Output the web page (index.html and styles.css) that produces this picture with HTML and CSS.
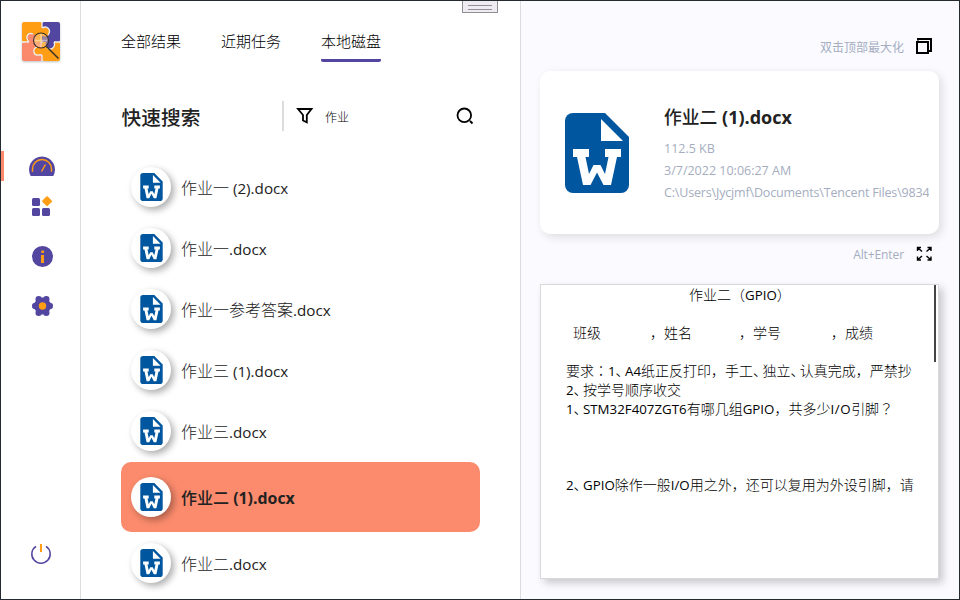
FILE: index.html
```html
<!DOCTYPE html>
<html lang="zh-CN">
<head>
<meta charset="utf-8">
<title>快速搜索</title>
<link rel="stylesheet" href="styles.css">
</head>
<body>
<svg class="defs" width="0" height="0">
  <symbol id="word" viewBox="0 0 64 80">
    <path fill="#00569f" d="M8 0H40L64 24V72a8 8 0 0 1-8 8H8a8 8 0 0 1-8-8V8a8 8 0 0 1 8-8z"/>
    <path fill="#fff" d="M36 6V28H58zM8 36H24V44H20.500L24 61 28.500 52H35.500L40 61 43.500 44H40V36H56V44H52L46 72H38.500L32 59.500 25.500 72H18L12 44H8z"/>
  </symbol>
</svg>
<div class="window">
  <nav class="sidebar">
    <svg class="logo" width="42" height="42" viewBox="0 0 42 42">
      <rect x="1" y="1" width="20" height="20" rx="2" fill="#ff9d14"/>
      <rect x="21" y="1" width="18" height="20" rx="2" fill="#5346a0"/>
      <rect x="1" y="21" width="20" height="19" rx="2" fill="#fa8a6b"/>
      <rect x="21" y="21" width="18" height="19" rx="2" fill="#ff9d14"/>
      <circle cx="10.500" cy="17" r="4.500" fill="#fa8a6b"/>
      <path d="M8 21C3 15 8 11 12 13" fill="none" stroke="#eee" stroke-width="1.300"/>
      <circle cx="24" cy="11" r="4.500" fill="#ff9d14"/>
      <path d="M21 7C26 4 31 9 27 14" fill="none" stroke="#eee" stroke-width="1.300"/>
      <circle cx="29" cy="23" r="4.500" fill="#5346a0"/>
      <path d="M33 21C35 26 30 30 26 27" fill="none" stroke="#eee" stroke-width="1.300"/>
      <circle cx="17" cy="30" r="4.500" fill="#ff9d14"/>
      <path d="M16 26C11 28 12 35 18 34H21" fill="none" stroke="#eee" stroke-width="1.300"/>
      <path d="M1 21H8M33 21H39M21 1V7M21 34V40" stroke="#eee" stroke-width="1.300"/>
      <circle cx="20" cy="19.500" r="7.500" fill="#ffd9a0" fill-opacity=".4"/>
      <path d="M14 19.500H26M20 13V26" stroke="#fff" stroke-width="1.500" opacity=".4"/>
      <circle cx="20" cy="19.500" r="7.500" fill="none" stroke="#33322f" stroke-width="1.100"/>
      <path d="M25.500 25.500L37.500 37.500" stroke="#33322f" stroke-width="1.500"/>
    </svg>
    <div class="nav-item active">
      <svg width="26" height="20" viewBox="0 0 26 20"><path fill="#5346a0" d="M1.700 20A13 13 0 1 1 24.300 20z"/><path d="M3.500 15.800V13a9.500 9.500 0 0 1 19 0V15.800" fill="none" stroke="#ff9d14" stroke-width="1.500"/><path d="M12.500 15.500L16.500 8.500" stroke="#ff9d14" stroke-width="1.400"/></svg>
    </div>
    <div class="nav-item tiles">
      <svg width="21" height="21" viewBox="0 0 21 21"><g fill="#5346a0"><rect y="2" width="8" height="8" rx="1.500"/><rect y="12" width="8" height="8" rx="1.500"/><rect x="10" y="12" width="8" height="8" rx="1.500"/></g><rect x="11.300" y="1.400" width="7.500" height="7.500" rx="1" fill="#ff9d14" transform="rotate(45 15 5.200)"/></svg>
    </div>
    <div class="nav-item">
      <svg width="22" height="22" viewBox="0 0 22 22"><circle cx="10.500" cy="11.500" r="10.500" fill="#5346a0"/><path d="M9 10H12V18H9zM9.300 5.500H12V8H9.300z" fill="#ff9d14"/></svg>
    </div>
    <div class="nav-item gear">
      <svg width="22" height="20" viewBox="0.5 0 22 20"><g fill="#5346a0"><circle cx="11" cy="10" r="8.400"/><circle cx="7.200" cy="3.300" r="3.200"/><circle cx="14.800" cy="3.300" r="3.200"/><circle cx="3.800" cy="10" r="3.300"/><circle cx="18.200" cy="10" r="3.300"/><circle cx="7.200" cy="16.700" r="3.200"/><circle cx="14.800" cy="16.700" r="3.200"/></g><circle cx="11" cy="10" r="3.700" fill="#ff9d14"/></svg>
    </div>
    <svg class="power" width="22" height="22" viewBox="0 0 22 22"><path d="M6 3.300A9.200 9.200 0 1 0 16 3.300" fill="none" stroke="#5346a0" stroke-width="1.500"/><path d="M11 1V9" stroke="#ff9d14" stroke-width="2"/></svg>
  </nav>

  <main class="results">
    <div class="grip"></div>
    <div class="tabs">
      <span class="tab">全部结果</span><span class="tab">近期任务</span><span class="tab current">本地磁盘</span>
    </div>
    <div class="search">
      <h1>快速搜索</h1>
      <div class="field">
        <svg width="18" height="18" viewBox="0 0 18 18"><path d="M2 2H15.500L10.800 8V15.300L7 13.500V8z" fill="none" stroke="#000" stroke-width="1.800"/></svg>
        <span class="query">作业</span>
        <svg width="18" height="18" viewBox="0 0 18 18"><circle cx="8.300" cy="8.300" r="6.800" fill="none" stroke="#000" stroke-width="1.800"/><path d="M14 14L16.500 16.500" stroke="#000" stroke-width="2"/></svg>
      </div>
    </div>
    <div class="list">
      <div class="row"><i class="disc"><svg width="23" height="28"><use href="#word"/></svg></i><span class="name">作业一<b class="lat"> (2).docx</b></span></div>
      <div class="row"><i class="disc"><svg width="23" height="28"><use href="#word"/></svg></i><span class="name">作业一<b class="lat">.docx</b></span></div>
      <div class="row"><i class="disc"><svg width="23" height="28"><use href="#word"/></svg></i><span class="name">作业一参考答案<b class="lat">.docx</b></span></div>
      <div class="row"><i class="disc"><svg width="23" height="28"><use href="#word"/></svg></i><span class="name">作业三<b class="lat"> (1).docx</b></span></div>
      <div class="row"><i class="disc"><svg width="23" height="28"><use href="#word"/></svg></i><span class="name">作业三<b class="lat">.docx</b></span></div>
      <div class="row selected"><i class="disc"><svg width="23" height="28"><use href="#word"/></svg></i><span class="name">作业二<b class="lat"> (1).docx</b></span></div>
      <div class="row"><i class="disc"><svg width="23" height="28"><use href="#word"/></svg></i><span class="name">作业二<b class="lat">.docx</b></span></div>
    </div>
  </main>

  <aside class="detail">
    <div class="hint top"><span>双击顶部最大化</span>
      <svg width="16" height="16" viewBox="0 0 16 16"><path d="M2 2.500V1H15V13H13" fill="none" stroke="#000" stroke-width="2"/><rect x="1" y="4" width="11" height="11" fill="none" stroke="#000" stroke-width="2"/></svg>
    </div>
    <section class="card">
      <svg width="64" height="80"><use href="#word"/></svg>
      <div class="info">
        <h2>作业二<b class="lat"> (1).docx</b></h2>
        <p class="size">112.5 KB</p>
        <p class="date">3/7/2022 10:06:27 AM</p>
        <p class="path">C:\Users\Jycjmf\Documents\Tencent Files\9834</p>
      </div>
    </section>
    <div class="hint bottom"><span>Alt+Enter</span>
      <svg width="16" height="16" viewBox="0 0 16 16"><path d="M1.500 5V1.500H5M1.500 1.500L6 5.500M11.500 1.500H15V5M15 1.500L10.500 5.500M1.500 10.500V14H5M1.500 14L6 10M11.500 14H15V10.500M15 14L10.500 10" fill="none" stroke="#000" stroke-width="1.400"/></svg>
    </div>
    <section class="preview">
      <div class="page">
        <p class="center">作业二（<b class="lat">GPIO</b>）</p>
        <p></p>
        <p class="blanks"><span class="f1">班级</span><span class="f2">，姓名</span><span class="f3">，学号</span><span class="f4">，成绩</span></p>
        <p></p>
        <p>要求<i class="mid" lang="ja">：</i><b class="lat">1</b><i class="dun">、</i><b class="lat">A4</b>纸正反打印，手工<i class="dun">、</i>独立<i class="dun">、</i>认真完成，严禁抄</p>
        <p><b class="lat">2</b><i class="dun">、</i>按学号顺序收交</p>
        <p><b class="lat">1</b><i class="dun">、</i><b class="lat">STM32F407ZGT6</b>有哪几组<b class="lat">GPIO</b>，共多少<b class="lat io">I/O</b>引脚<i class="mid" lang="ja">？</i></p>
        <p></p><p></p><p></p>
        <p><b class="lat">2</b><i class="dun">、</i><b class="lat">GPIO</b>除作一般<b class="lat">I/O</b>用之外，还可以复用为外设引脚，请</p>
      </div>
      <div class="thumb"></div>
    </section>
  </aside>
</div>
</body>
</html>
```

FILE: styles.css
```css
* { box-sizing: border-box; margin: 0; padding: 0; }
body { width: 960px; height: 600px; overflow: hidden; font-family: "Noto Sans CJK SC", sans-serif; color: #222; }
.defs { position: absolute; }
svg { display: block; flex: none; }
i { font-style: normal; }
.lat { font-family: "Open Sans", sans-serif; font-weight: inherit; font-size: .95em; white-space: pre; }

.window { display: flex; width: 960px; height: 600px; border: 1px solid #252a30; background: #fff; }

.sidebar { width: 80px; border-right: 1px solid #dcdcde; display: flex; flex-direction: column; align-items: center; }
.logo { margin: 20px 0 88px 3px; filter: drop-shadow(0 1px 1px rgba(0,0,0,.25)); }
.nav-item { width: 100%; height: 30px; display: flex; justify-content: center; align-items: center; padding-left: 4px; margin-bottom: 20px; }
.nav-item.active { border-left: 3px solid #fa8a6b; padding-left: 0; margin-bottom: 10px; }
.nav-item.gear svg { margin-top: -1px; }
.power { margin-top: 202px; }

.results { width: 440px; border-right: 1px solid #dcdcde; position: relative; overflow: hidden; }
.grip { position: absolute; left: 381px; top: -1px; width: 36px; height: 13px; border: 1px solid #929094; background: #eeecf2; padding: 4px 5px; }
.grip::before { content: ""; display: block; height: 3px; border-top: 1px solid #929094; border-bottom: 1px solid #929094; }
.tabs { display: flex; gap: 40px; padding: 29px 0 0 40px; height: 61px; }
.tab { font-size: 15px; line-height: 22px; height: 32px; color: #000; font-weight: 300; width: 60px; white-space: nowrap; }
.tab.current { border-bottom: 3px solid #5346a0; border-radius: 2px; }
.search { display: flex; align-items: center; height: 30px; margin: 39px 0 0 40px; }
.search h1 { font-size: 19.7px; line-height: 30px; font-weight: 500; width: 161px; padding: 2px 0 0 .6px; }
.field { display: flex; align-items: center; width: 198px; height: 30px; border-left: 2px solid #dcdcde; padding-left: 12px; }
.query { flex: 1; font-size: 12px; font-weight: 300; padding-left: 11px; color: #000; }
.field svg:last-child { margin-right: 6px; }
.list { padding: 26px 40px 0; display: flex; flex-direction: column; gap: 1px; }
.row { flex: none; height: 60px; display: flex; align-items: center; gap: 10px; padding-left: 10px; border-radius: 10px; }
.row.selected { height: 70px; background: #fb8b6c; }
.disc { width: 40px; height: 40px; border-radius: 50%; background: #fff; display: grid; place-items: center; box-shadow: 3px 3px 7px rgba(0,0,0,.33); }
.name { font-size: 16px; font-weight: 300; line-height: 24px; padding-top: 1px; }
.name .lat { font-weight: 400; }
.selected .name { font-weight: 500; }
.selected .name .lat { font-weight: 700; font-size: 15.9px; }

.detail { width: 438px; flex: none; background: #fafaff; padding-left: 19px; }
.hint { display: flex; align-items: center; justify-content: flex-end; gap: 12px; padding-right: 27px; color: #a5adc0; font-size: 12px; }
.hint.top { height: 30px; margin-top: 30px; }
.hint.bottom { height: 30px; margin-top: 5px; margin-bottom: 15px; font-family: "Open Sans", sans-serif; }
.hint.bottom span { letter-spacing: -.1px; }
.card { margin-top: 10px; width: 399px; height: 163px; border-radius: 10px; background: #fff; box-shadow: 3px 3px 10px rgba(0,0,0,.12); display: flex; align-items: center; padding: 1px 10px 0 25px; gap: 35px; }
.info { flex: 1; min-width: 0; padding-top: 2px; }
.info h2 { font-size: 17.8px; line-height: 26px; font-weight: 500; margin: -1px 0 8px; }
.info h2 .lat { font-weight: 700; font-size: 18px; }
.info p { font: 12.5px/22px "Open Sans", sans-serif; color: #a5adc0; white-space: nowrap; overflow: hidden; }
.info .path { letter-spacing: -.17px; }
.preview { position: relative; width: 399px; height: 295px; border: 1px solid #d9d9dc; background: #fff; box-shadow: 4px 4px 8px rgba(0,0,0,.2); }
.page { padding: 0 24px 0 25px; font-size: 14px; color: #000; }
.page p { height: 19px; line-height: 19px; white-space: nowrap; font-weight: 300; }
.page .lat { font-weight: 400; }
.page .io { letter-spacing: .6px; }
.page .center { padding-left: 123px; }
.dun { font-feature-settings: "halt"; margin-right: 2.4px; }
.mid { font-family: "Noto Sans CJK JP", sans-serif; }
.blanks { display: flex; padding-left: 7px; }
.f1 { width: 77px; } .f2 { width: 89px; } .f3 { width: 92px; }
.thumb { position: absolute; right: 2px; top: 0; width: 2px; height: 77px; background: #444; }
```
